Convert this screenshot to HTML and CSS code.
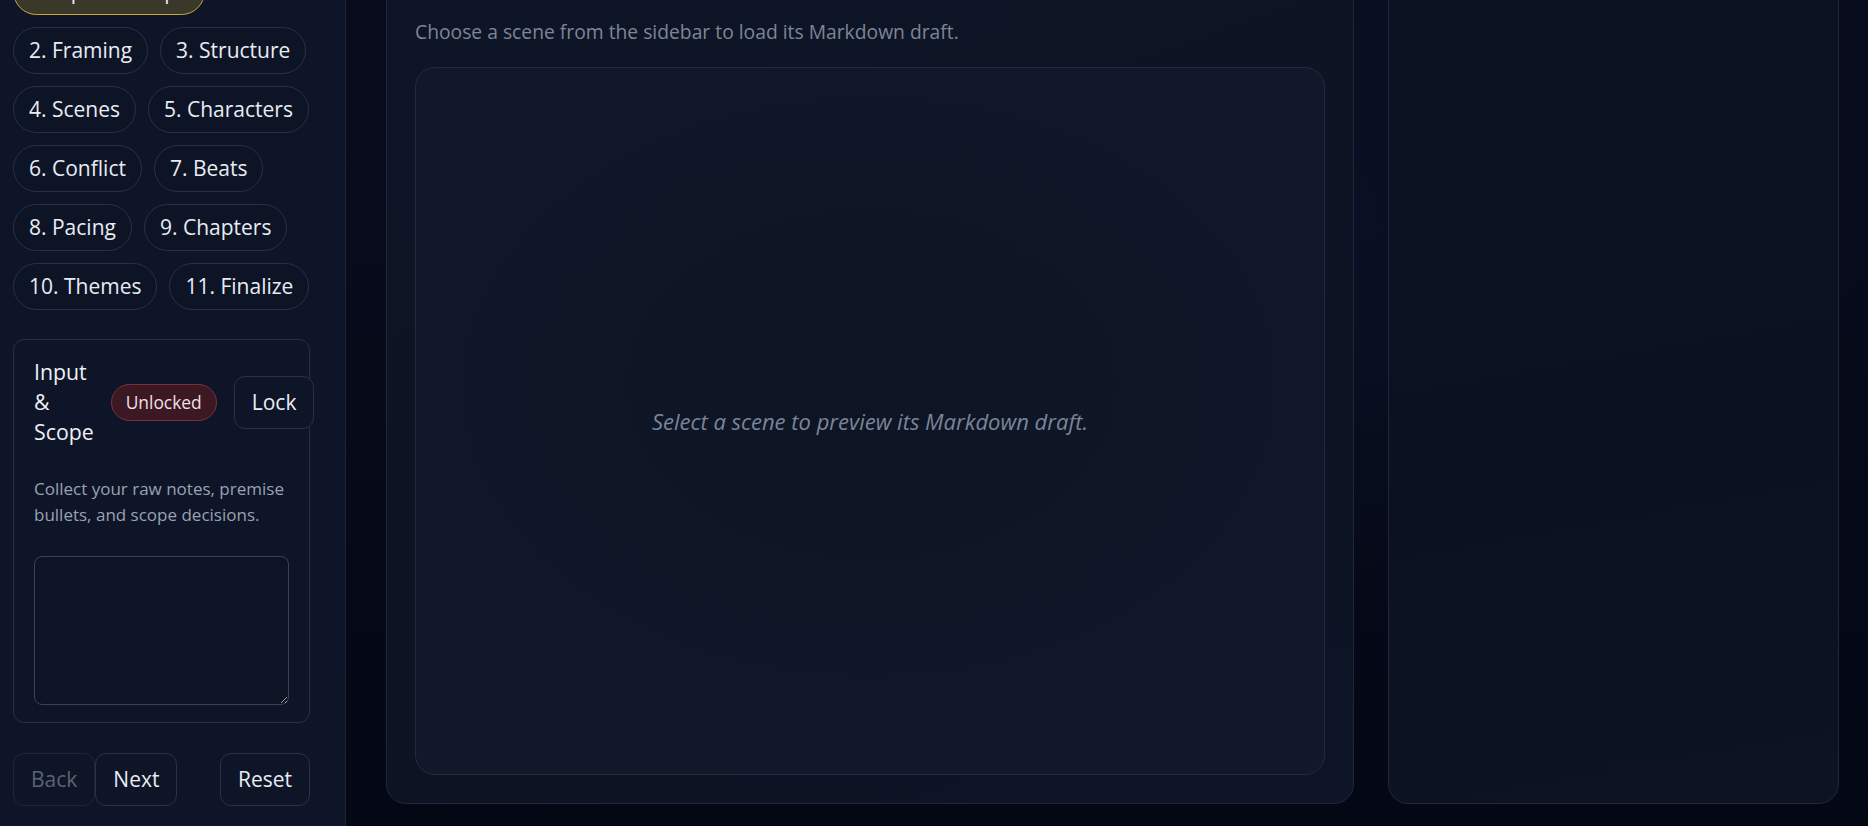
FILE: index.html
```html
<!DOCTYPE html>
<html lang="en">
<head>
<meta charset="utf-8">
<title>Scene Drafts</title>
<link rel="stylesheet" href="styles.css">
</head>
<body>
<div class="app">
  <aside class="sidebar">
    <div class="sidebar-inner">
      <nav class="steps">
        <button class="chip chip-active">1. Input &amp; Scope</button>
        <button class="chip">2. Framing</button>
        <button class="chip">3. Structure</button>
        <button class="chip">4. Scenes</button>
        <button class="chip">5. Characters</button>
        <button class="chip">6. Conflict</button>
        <button class="chip">7. Beats</button>
        <button class="chip">8. Pacing</button>
        <button class="chip">9. Chapters</button>
        <button class="chip">10. Themes</button>
        <button class="chip">11. Finalize</button>
      </nav>

      <section class="step-card">
        <header class="step-head">
          <h2 class="step-title">Input &amp; Scope</h2>
          <span class="badge">Unlocked</span>
          <button class="btn">Lock</button>
        </header>
        <p class="step-desc">Collect your raw notes, premise bullets, and scope decisions.</p>
        <textarea class="step-input"></textarea>
      </section>

      <div class="nav-row">
        <div class="nav-pair">
          <button class="btn btn-disabled" disabled>Back</button>
          <button class="btn">Next</button>
        </div>
        <button class="btn">Reset</button>
      </div>
    </div>
  </aside>

  <main class="workspace">
    <section class="card preview-card">
      <p class="subtitle">Choose a scene from the sidebar to load its Markdown draft.</p>
      <div class="preview-box">
        <p class="placeholder">Select a scene to preview its Markdown draft.</p>
      </div>
    </section>
    <section class="card side-card"></section>
  </main>
</div>
</body>
</html>
```

FILE: styles.css
```css
* {
  box-sizing: border-box;
}

html, body {
  margin: 0;
  padding: 0;
  height: 100%;
  overflow: hidden;
}

body {
  font-family: "Open Sans", "Noto Sans", sans-serif;
  color: #e6eaf1;
  background:
    radial-gradient(ellipse 55% 65% at 62% 28%, #0b1226 0%, rgba(11, 18, 38, 0) 70%),
    linear-gradient(180deg, #080c1d 0%, #040815 100%);
}

.app {
  display: flex;
  height: 826px;
}

/* ---------- Sidebar ---------- */
.sidebar {
  flex: 0 0 346px;
  width: 346px;
  min-width: 0;
  background: #0e1528;
  border-right: 1px solid #1c2436;
  padding: 0 35px 0 13px;
}

.sidebar-inner {
  margin-top: -32px;
}

.steps {
  display: flex;
  flex-wrap: wrap;
  gap: 12px;
}

.chip {
  font-family: inherit;
  font-size: 21px;
  line-height: 33px;
  color: #e8ecf3;
  background: #0d1426;
  border: 1px solid #283246;
  border-radius: 999px;
  padding: 6px 15px;
  white-space: nowrap;
}

.chip-active {
  background: #3a3829;
  border-color: #c8a93c;
}

.step-card {
  margin-top: 29px;
  border: 1px solid #263044;
  border-radius: 11px;
  padding: 17px 20px 17px;
}

.step-head {
  display: flex;
  align-items: center;
  gap: 17px;
}

.step-title {
  margin: 0;
  font-size: 21.3px;
  font-weight: 400;
  line-height: 30px;
  width: min-content;
  flex: 0 0 auto;
  color: #eef1f6;
}

.badge {
  flex: 0 0 auto;
  font-size: 17.4px;
  line-height: 35px;
  padding: 0 14px;
  border-radius: 999px;
  background: #3c1922;
  border: 1px solid #7d2f3e;
  color: #f1dfe4;
}

.btn {
  flex: 0 0 auto;
  font-family: inherit;
  font-size: 21px;
  line-height: 33px;
  padding: 9px 17px;
  border: 1px solid #283246;
  border-radius: 11px;
  background: #0e1527;
  color: #e8ecf3;
}

.btn-disabled {
  color: #5a6373;
  border-color: #1e2637;
}

.step-desc {
  margin: 29px 0 0;
  font-size: 17px;
  line-height: 25.5px;
  color: #9aa2b1;
}

.step-input {
  display: block;
  margin-top: 29px;
  width: 100%;
  height: 149px;
  background: #0d1426;
  border: 1px solid #394357;
  border-radius: 8px;
  resize: vertical;
  color: #e6eaf1;
  font-family: inherit;
}

.nav-row {
  margin-top: 30px;
  display: flex;
  justify-content: space-between;
}

.nav-pair {
  display: flex;
}

/* ---------- Workspace ---------- */
.workspace {
  flex: 1 1 auto;
  min-width: 0;
  display: grid;
  grid-template-columns: 968px 451px;
  column-gap: 34px;
  padding: 0 29px 22px 40px;
}

.card {
  margin-top: -30px;
  border: 1px solid #1f2839;
  border-radius: 20px;
  background: linear-gradient(160deg, #0e1526 0%, #0c1323 60%, #0d1526 100%);
}

.preview-card {
  display: flex;
  flex-direction: column;
  padding: 46px 28px 28px;
}

.subtitle {
  margin: 0;
  font-size: 19.3px;
  line-height: 30px;
  color: #7d8697;
}

.preview-box {
  flex: 1 1 auto;
  margin-top: 20px;
  border: 1px solid #222b3d;
  border-radius: 20px;
  background: radial-gradient(ellipse 60% 55% at 50% 45%, #0d1424 0%, #101829 100%);
  display: flex;
  align-items: center;
  justify-content: center;
}

.placeholder {
  margin: 0;
  font-size: 22px;
  font-style: italic;
  color: #7b8599;
}

.side-card {
  background: linear-gradient(170deg, #0c1222 0%, #0b1121 60%, #0c1323 100%);
}
```
